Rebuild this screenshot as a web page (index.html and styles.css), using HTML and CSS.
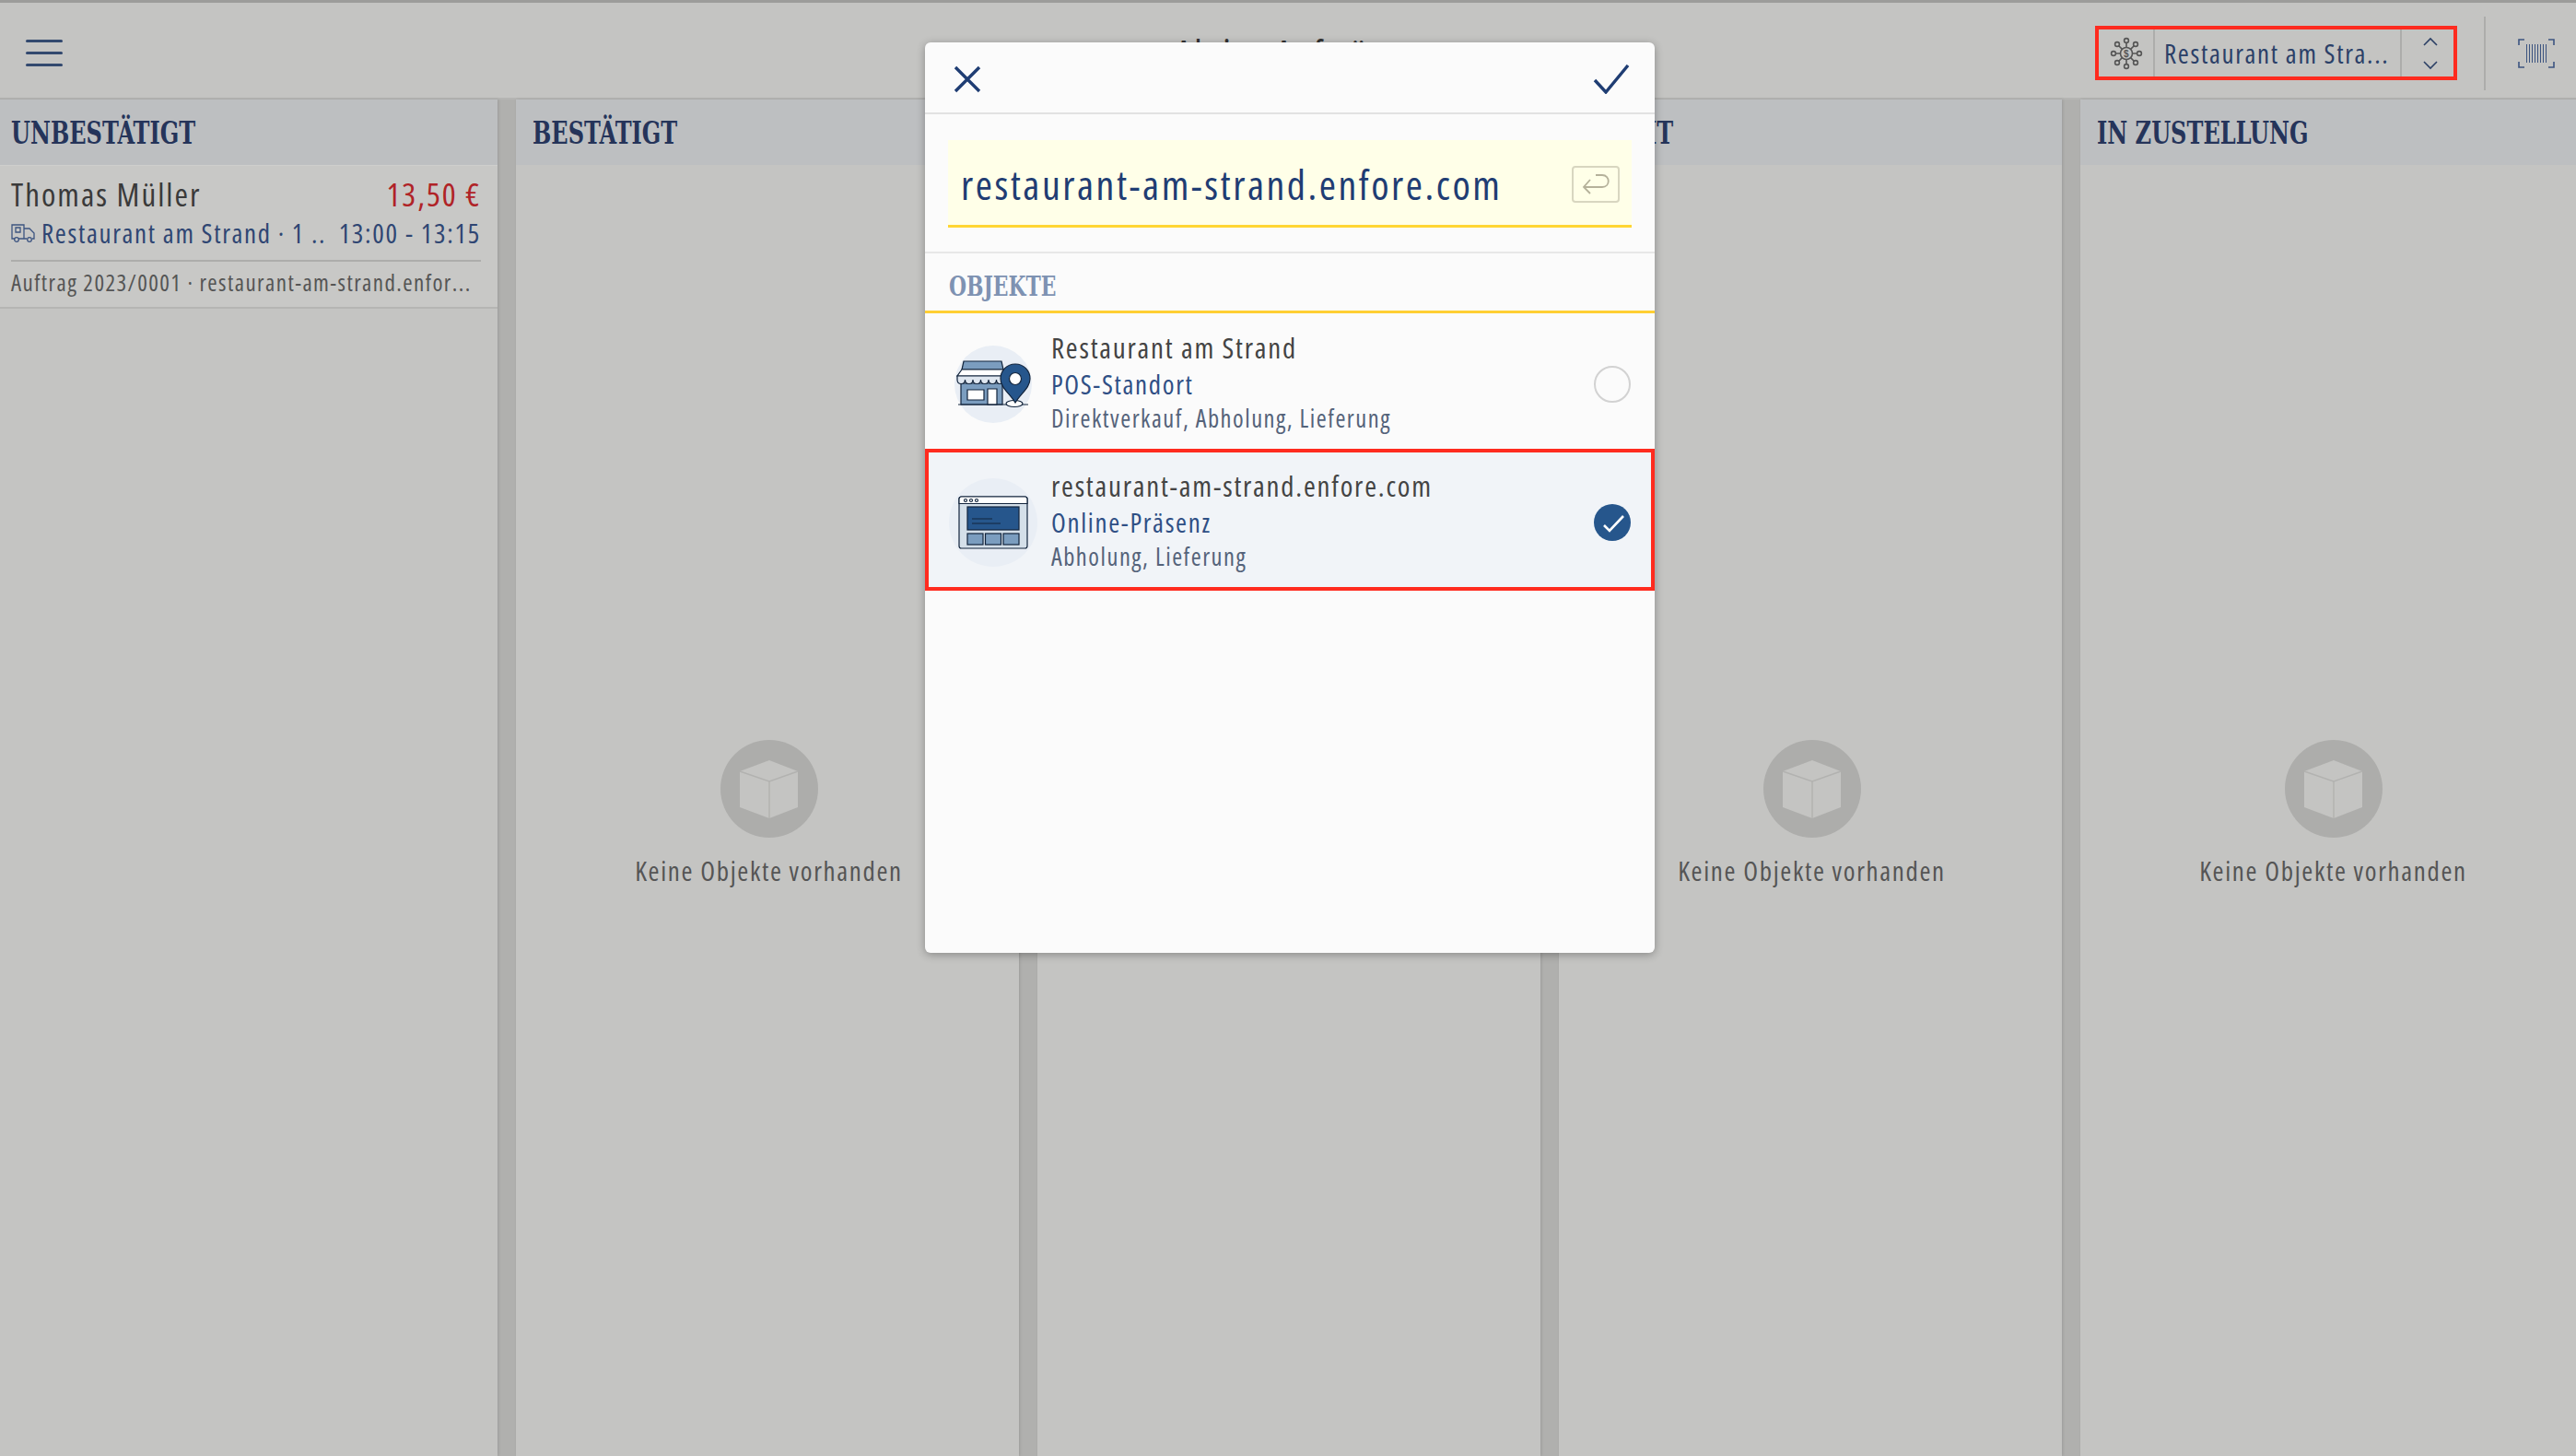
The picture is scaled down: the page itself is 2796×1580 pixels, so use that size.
FILE: index.html
```html
<!DOCTYPE html>
<html lang="de">
  <head>
    <meta charset="UTF-8" />
    <meta name="viewport" content="width=device-width, initial-scale=1.0" />
    <title>Aktive Aufträge</title>
    <link rel="stylesheet" href="styles.css">
  </head>
  <body>
    <header class="topbar">
      <div class="burger"><span></span><span></span><span></span></div>
      <div class="page-title">Aktive Aufträge</div>
      <div class="switcher">
        <div class="switcher-icon">
          <svg width="36" height="36" viewBox="0 0 36 36" fill="none" stroke="#555" stroke-width="1.6">
            <circle cx="18" cy="18" r="6.5" />
            <path d="M18 11.5V6M18 24.5V30M11.5 18H6M24.5 18H30M13.4 13.4L9.5 9.5M22.6 13.4L26.5 9.5M13.4 22.6L9.5 26.5M22.6 22.6L26.5 26.5" />
            <circle cx="18" cy="4" r="2.4" /><circle cx="18" cy="32" r="2.4" />
            <circle cx="4" cy="18" r="2.4" /><circle cx="32" cy="18" r="2.4" />
            <circle cx="8" cy="8" r="2.4" /><circle cx="28" cy="8" r="2.4" />
            <circle cx="8" cy="28" r="2.4" /><circle cx="28" cy="28" r="2.4" />
            <text x="18" y="21.5" text-anchor="middle" font-size="10" font-weight="700" fill="#555" stroke="none" font-family="Liberation Sans, sans-serif">$</text>
          </svg>
        </div>
        <div class="switcher-label">Restaurant am Stra...</div>
        <div class="switcher-arrows">
          <svg width="18" height="36" viewBox="0 0 18 36" fill="none" stroke="#2c4066" stroke-width="1.6">
            <path d="M2 9L9 2L16 9M2 27L9 34L16 27" />
          </svg>
        </div>
      </div>
      <div class="topbar-sep"></div>
      <svg class="barcode" width="42" height="32" viewBox="0 0 42 32" fill="none" stroke="#3c5480" stroke-width="1.600">
        <path d="M8 1H2V7M2 25V31H8M34 1H40V7M40 25V31H34" />
        <path stroke-width="1" d="M10.500 6V26M13.500 6V26M16.500 6V26M19.500 6V26M22.500 6V26M25.500 6V26M28.500 6V26M31.500 6V26" />
      </svg>
    </header>

    <main class="board">
      <section class="column">
        <h2 class="column-head"><span>UNBESTÄTIGT</span></h2>
        <div class="order">
          <div class="order-top">
            <span class="order-name">Thomas Müller</span>
            <span class="order-price">13,50 €</span>
          </div>
          <div class="order-sub">
            <svg width="26" height="20" viewBox="0 0 26 20" fill="none" stroke="#3c5480" stroke-width="1.3">
              <path d="M4 16H1V1H14V16H8M14 5H20L25 10V16H23M14 16H17M5 4H10V9H5Z" />
              <circle cx="6" cy="17" r="2.300" /><circle cx="20" cy="17" r="2.300" />
            </svg>
            <span class="order-place">Restaurant am Strand · 1 ..</span>
            <span class="order-time">13:00 - 13:15</span>
          </div>
          <div class="order-meta">Auftrag 2023/0001 · restaurant-am-strand.enfor...</div>
        </div>
      </section>

      <section class="column">
        <h2 class="column-head"><span>BESTÄTIGT</span></h2>
        <div class="empty">
          <svg class="cube" width="106" height="106" viewBox="0 0 106 106">
            <circle cx="53" cy="53" r="53" fill="#adadab" />
            <path d="M53 22L84 34V73L53 85L21 73V34Z" fill="#c4c4c2" />
            <path d="M21 34L53 45L84 34M53 45V85" fill="none" stroke="#b2b2b0" stroke-width="1.500" />
          </svg>
          <p>Keine Objekte vorhanden</p>
        </div>
      </section>

      <section class="column">
        <h2 class="column-head"></h2>
      </section>

      <section class="column">
        <h2 class="column-head"><span>BEREIT</span></h2>
        <div class="empty">
          <svg class="cube" width="106" height="106" viewBox="0 0 106 106">
            <circle cx="53" cy="53" r="53" fill="#adadab" />
            <path d="M53 22L84 34V73L53 85L21 73V34Z" fill="#c4c4c2" />
            <path d="M21 34L53 45L84 34M53 45V85" fill="none" stroke="#b2b2b0" stroke-width="1.500" />
          </svg>
          <p>Keine Objekte vorhanden</p>
        </div>
      </section>

      <section class="column">
        <h2 class="column-head"><span>IN ZUSTELLUNG</span></h2>
        <div class="empty">
          <svg class="cube" width="106" height="106" viewBox="0 0 106 106">
            <circle cx="53" cy="53" r="53" fill="#adadab" />
            <path d="M53 22L84 34V73L53 85L21 73V34Z" fill="#c4c4c2" />
            <path d="M21 34L53 45L84 34M53 45V85" fill="none" stroke="#b2b2b0" stroke-width="1.500" />
          </svg>
          <p>Keine Objekte vorhanden</p>
        </div>
      </section>
    </main>

    <div class="modal">
      <div class="modal-head">
        <svg width="30" height="30" viewBox="0 0 30 30" fill="none" stroke="#1f3d73" stroke-width="3.400">
          <path d="M2 2L28 28M28 2L2 28" />
        </svg>
        <svg width="40" height="32" viewBox="0 0 40 32" fill="none" stroke="#1f3d73" stroke-width="3.400">
          <path d="M2 17L14 30L38 1" />
        </svg>
      </div>
      <div class="search">
        <div class="search-box">
          <span class="search-text">restaurant-am-strand.enfore.com</span>
          <span class="enter-key">
            <svg width="30" height="24" viewBox="0 0 30 24" fill="none" stroke="#b5b19a" stroke-width="1.800">
              <path d="M9 7L2 15L9 22M2 15H22C31 15 31 2 22 2H15" />
            </svg>
          </span>
        </div>
      </div>
      <div class="section-head"><span>OBJEKTE</span></div>
      <div class="row">
        <svg class="row-icon" width="84" height="84" viewBox="0 0 84 84">
          <circle cx="42" cy="42" r="42" fill="#e9eef5" />
          <g stroke="#12243c" stroke-width="1.200">
            <path d="M7 41H52V64H7Z" fill="#7b9dbf" />
            <path d="M8 26L10 17H51L53 26Z" fill="#7b9dbf" />
            <path d="M8 26H53L55 33H3Z" fill="#fff" />
            <path d="M3 33V37C3 43 11.500 43 11.500 37C11.500 43 20 43 20 37C20 43 28.500 43 28.500 37C28.500 43 37 43 37 37C37 43 45.500 43 45.500 37C45.500 43 54 43 54 37V33Z" fill="#dfe7f0" />
            <path d="M14 48H32V59H14Z" fill="#fff" />
            <path d="M36 47H46V64H36Z" fill="#fff" />
            <path d="M4 64H80" fill="none" />
            <ellipse cx="65" cy="63" rx="9" ry="3.500" fill="#fff" />
            <path d="M66 62C60 52 50 46 50 36C50 27 57 20 66 20C75 20 82 27 82 36C82 46 72 52 66 62Z" fill="#26568c" />
            <circle cx="66" cy="36" r="6.500" fill="#fff" />
          </g>
        </svg>
        <div class="row-text">
          <div class="row-title">Restaurant am Strand</div>
          <div class="row-type">POS-Standort</div>
          <div class="row-note">Direktverkauf, Abholung, Lieferung</div>
        </div>
        <span class="radio"></span>
      </div>
      <div class="row row-selected">
        <svg class="row-icon" width="96" height="96" viewBox="0 0 96 96">
          <circle cx="48" cy="48" r="48" fill="#e9eef5" />
          <g stroke="#12243c" stroke-width="1.200">
            <rect x="11" y="20" width="74" height="56" rx="2.500" fill="#d4dfe9" />
            <path d="M11 22.500C11 21 12 20 13.500 20H82.500C84 20 85 21 85 22.500V27.500H11Z" fill="#fff" />
            <circle cx="18" cy="24" r="1.500" fill="#fff" />
            <circle cx="24" cy="24" r="1.500" fill="#fff" />
            <circle cx="30" cy="24" r="1.500" fill="#fff" />
            <rect x="20" y="31" width="56" height="25" fill="#26568c" />
            <path d="M25 44H47M25 49H56" fill="none" />
            <rect x="20" y="60" width="17" height="12" fill="#7b9dbf" />
            <rect x="39.500" y="60" width="17" height="12" fill="#7b9dbf" />
            <rect x="59" y="60" width="17" height="12" fill="#7b9dbf" />
          </g>
        </svg>
        <div class="row-text">
          <div class="row-title">restaurant-am-strand.enfore.com</div>
          <div class="row-type">Online-Präsenz</div>
          <div class="row-note">Abholung, Lieferung</div>
        </div>
        <span class="radio radio-on">
          <svg width="40" height="40" viewBox="0 0 40 40" fill="none" stroke="#fff" stroke-width="2.600">
            <path d="M11 23L17 29L32 13" />
          </svg>
        </span>
      </div>
    </div>
  </body>
</html>
```

FILE: styles.css
```css
* {
  box-sizing: border-box;
  letter-spacing: 0.057em;
}

body {
  margin: 0;
  width: 2796px;
  height: 1580px;
  overflow: hidden;
  background-color: #b0b0ae;
  font-family: "Open Sans", sans-serif;
  font-stretch: 75%;
  font-weight: 500;
}

/* top bar */
.topbar {
  height: 108px;
  padding: 6px 22px 0 0;
  display: flex;
  align-items: center;
  background-color: #c4c4c2;
  border-top: 3px solid #9c9c9a;
  border-bottom: 2px solid #b5b5b3;
}

.burger {
  margin-left: 28px;
  width: 40px;
  display: flex;
  flex-direction: column;
  gap: 10px;
}

.burger span {
  height: 3px;
  background-color: #33496f;
  border-radius: 2px;
}

.page-title {
  flex: 1;
  padding-left: 470px;
  padding-right: 14px;
  text-align: center;
  font-size: 41px;
  color: #333;
}

.switcher {
  width: 393px;
  height: 59px;
  display: flex;
  align-items: stretch;
  border: 4px solid #ff2b1f;
}

.switcher-icon {
  width: 61px;
  display: flex;
  align-items: center;
  justify-content: center;
  border-right: 2px solid #adadab;
}

.switcher-label {
  width: 268px;
  padding-left: 10px;
  border-right: 2px solid #adadab;
  font-size: 29px;
  line-height: 51px;
  color: #2b4068;
  white-space: nowrap;
}

.switcher-arrows {
  flex: 1;
  padding-left: 6px;
  display: flex;
  align-items: center;
  justify-content: center;
}

.topbar-sep {
  width: 2px;
  height: 80px;
  margin-left: 29px;
  background-color: #adadab;
}

.barcode {
  margin-left: 34px;
}

/* order columns */
.board {
  margin-left: -6px;
  display: flex;
  gap: 20px;
  height: 1472px;
}

.column {
  flex: 0 0 546px;
  background-color: #c4c4c2;
  box-shadow: 1px 0 3px rgba(0, 0, 0, 0.12);
  display: flex;
  flex-direction: column;
}

.column-head {
  margin: 0;
  height: 71px;
  padding-left: 18px;
  flex: none;
  background-color: #bdbfc1;
  font-family: "DejaVu Serif", serif;
  font-size: 33px;
  font-weight: 700;
  line-height: 73px;
  color: #25345a;
  white-space: nowrap;
}

.column-head span,
.section-head span {
  display: inline-block;
  letter-spacing: 0;
  transform: scaleX(0.81);
  transform-origin: left;
}

.order {
  height: 156px;
  padding: 11px 18px 0;
  background-color: #c8c8c6;
  border-top: 1px solid #cfcfcd;
  border-bottom: 2px solid #b5b5b3;
}

.order-top {
  display: flex;
  justify-content: space-between;
  line-height: 40px;
}

.order-name {
  font-size: 35px;
  color: #3a3a3a;
}

.order-price {
  font-size: 35px;
  font-weight: 400;
  color: #b02327;
}

.order-sub {
  margin-top: 4px;
  display: flex;
  align-items: center;
  line-height: 36px;
  font-size: 29px;
  font-weight: 400;
  color: #2f4673;
  padding-bottom: 11px;
  border-bottom: 2px solid #adadab;
}

.order-place {
  margin-left: 7px;
  flex: 1;
  white-space: nowrap;
}

.order-time {
  font-size: 29.500px;
}

.order-meta {
  margin-top: 5px;
  font-size: 25px;
  font-weight: 400;
  line-height: 34px;
  color: #555;
  white-space: nowrap;
}

.empty {
  margin-top: 624px;
  padding-left: 3px;
  display: flex;
  flex-direction: column;
  align-items: center;
}

.empty p {
  margin: 16px 0 0;
  font-size: 29px;
  line-height: 40px;
  color: #555;
}

/* dialog */
.modal {
  position: absolute;
  left: 1004px;
  top: 46px;
  width: 792px;
  height: 988px;
  background-color: #fbfbfb;
  border-radius: 6px;
  box-shadow: 0 2px 10px rgba(0, 0, 0, 0.3);
}

.modal-head {
  height: 78px;
  padding: 4px 27px 0 31px;
  display: flex;
  align-items: center;
  justify-content: space-between;
  border-bottom: 2px solid #e2e2e2;
}

.search {
  height: 151px;
  padding: 28px 25px 0;
  border-bottom: 2px solid #e8e8e8;
}

.search-box {
  height: 95px;
  padding: 3px 13px 0 14px;
  display: flex;
  align-items: center;
  justify-content: space-between;
  background-color: #ffffe8;
  border-bottom: 3px solid #ffd633;
}

.search-text {
  font-size: 44px;
  color: #1f3d73;
}

.enter-key {
  width: 52px;
  height: 40px;
  display: flex;
  align-items: center;
  justify-content: center;
  border: 2px solid #d8d6c0;
  border-radius: 4px;
}

.section-head {
  height: 65px;
  padding-left: 26px;
  border-bottom: 3px solid #ffcf33;
  font-family: "DejaVu Serif", serif;
  font-size: 30px;
  font-weight: 700;
  line-height: 71px;
  color: #7e92b2;
}

.row {
  height: 147px;
  padding: 0 26px 0 32px;
  display: flex;
  align-items: center;
  gap: 21px;
}

.row-selected {
  height: 154px;
  padding: 0 22px;
  gap: 15px;
  background-color: #f1f4f8;
  border: 4px solid #ff2b1f;
}

.row-icon,
.radio {
  margin-top: 6px;
}

.row-text {
  flex: 1;
  padding-top: 2px;
}

.row-title {
  font-size: 31px;
  line-height: 40px;
  color: #444;
}

.row-type {
  font-size: 29px;
  line-height: 39px;
  color: #2f4f85;
}

.row-note {
  font-size: 26.500px;
  line-height: 37px;
  color: #55637a;
}

.radio {
  width: 40px;
  height: 40px;
  border: 2px solid #d2d2d2;
  border-radius: 50%;
}

.radio-on {
  border: none;
  background-color: #26568c;
}
```
